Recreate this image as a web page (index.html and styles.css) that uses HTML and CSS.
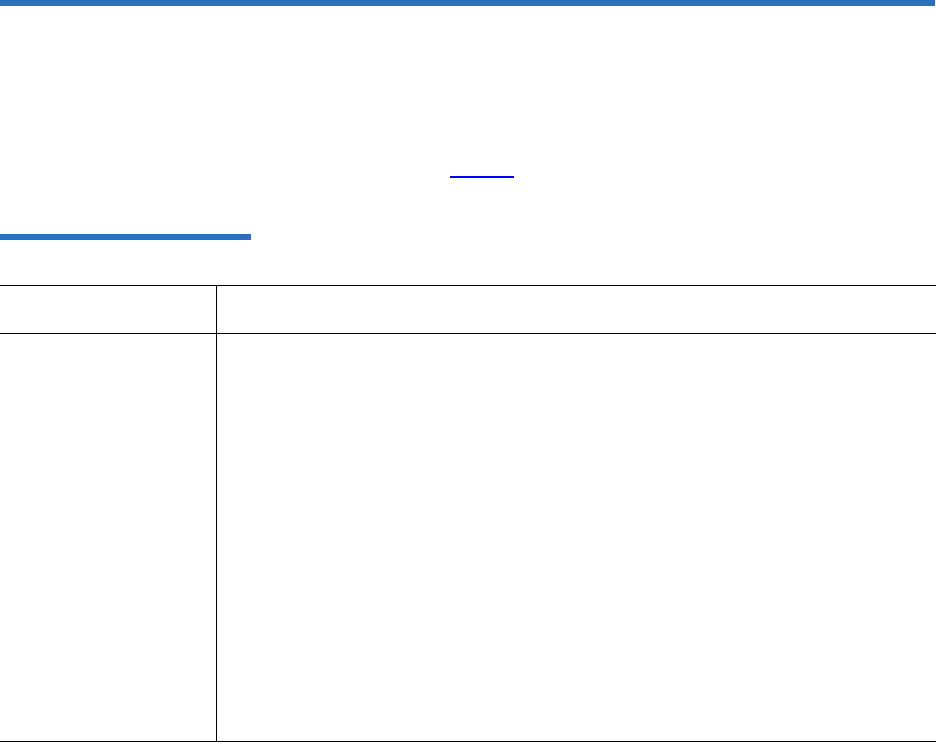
FILE: index.html
```html
<!DOCTYPE html>
<html lang="en">
<head>
    <meta charset="UTF-8">
    <meta name="viewport" content="width=device-width, initial-scale=1.0">
    <title>Page</title>
    <link rel="stylesheet" href="styles.css">
</head>
<body>
    <div class="top-bar"></div>

    <div class="intro">
        <a class="intro-link" href="#"></a>
    </div>

    <div class="section-rule"></div>

    <table class="info-table">
        <thead>
            <tr>
                <th class="col-name"></th>
                <th class="col-desc"></th>
            </tr>
        </thead>
        <tbody>
            <tr>
                <td class="col-name"></td>
                <td class="col-desc"></td>
            </tr>
        </tbody>
    </table>
</body>
</html>
```

FILE: styles.css
```css
body {
    margin: 0;
    padding: 0;
    background: #fff;
    font-family: "Liberation Sans", Arial, sans-serif;
    overflow: hidden;
}

.top-bar {
    width: 935px;
    height: 6px;
    background: #2b70c0;
}

.intro {
    height: 228px;
    box-sizing: border-box;
    padding-top: 170px;
    padding-left: 450px;
}

.intro-link {
    display: block;
    width: 64px;
    height: 0;
    border-bottom: 2px solid #0000ff;
}

.section-rule {
    width: 251px;
    height: 6px;
    background: #2b70c0;
}

.info-table {
    margin-top: 45px;
    width: 936px;
    border-collapse: collapse;
}

.info-table th,
.info-table td {
    padding: 0;
    border-top: 1px solid #000;
    border-bottom: 1px solid #000;
}

.info-table thead tr {
    height: 48px;
}

.info-table tbody tr {
    height: 408px;
}

.info-table .col-name {
    width: 216px;
    border-right: 1px solid #000;
}
```
